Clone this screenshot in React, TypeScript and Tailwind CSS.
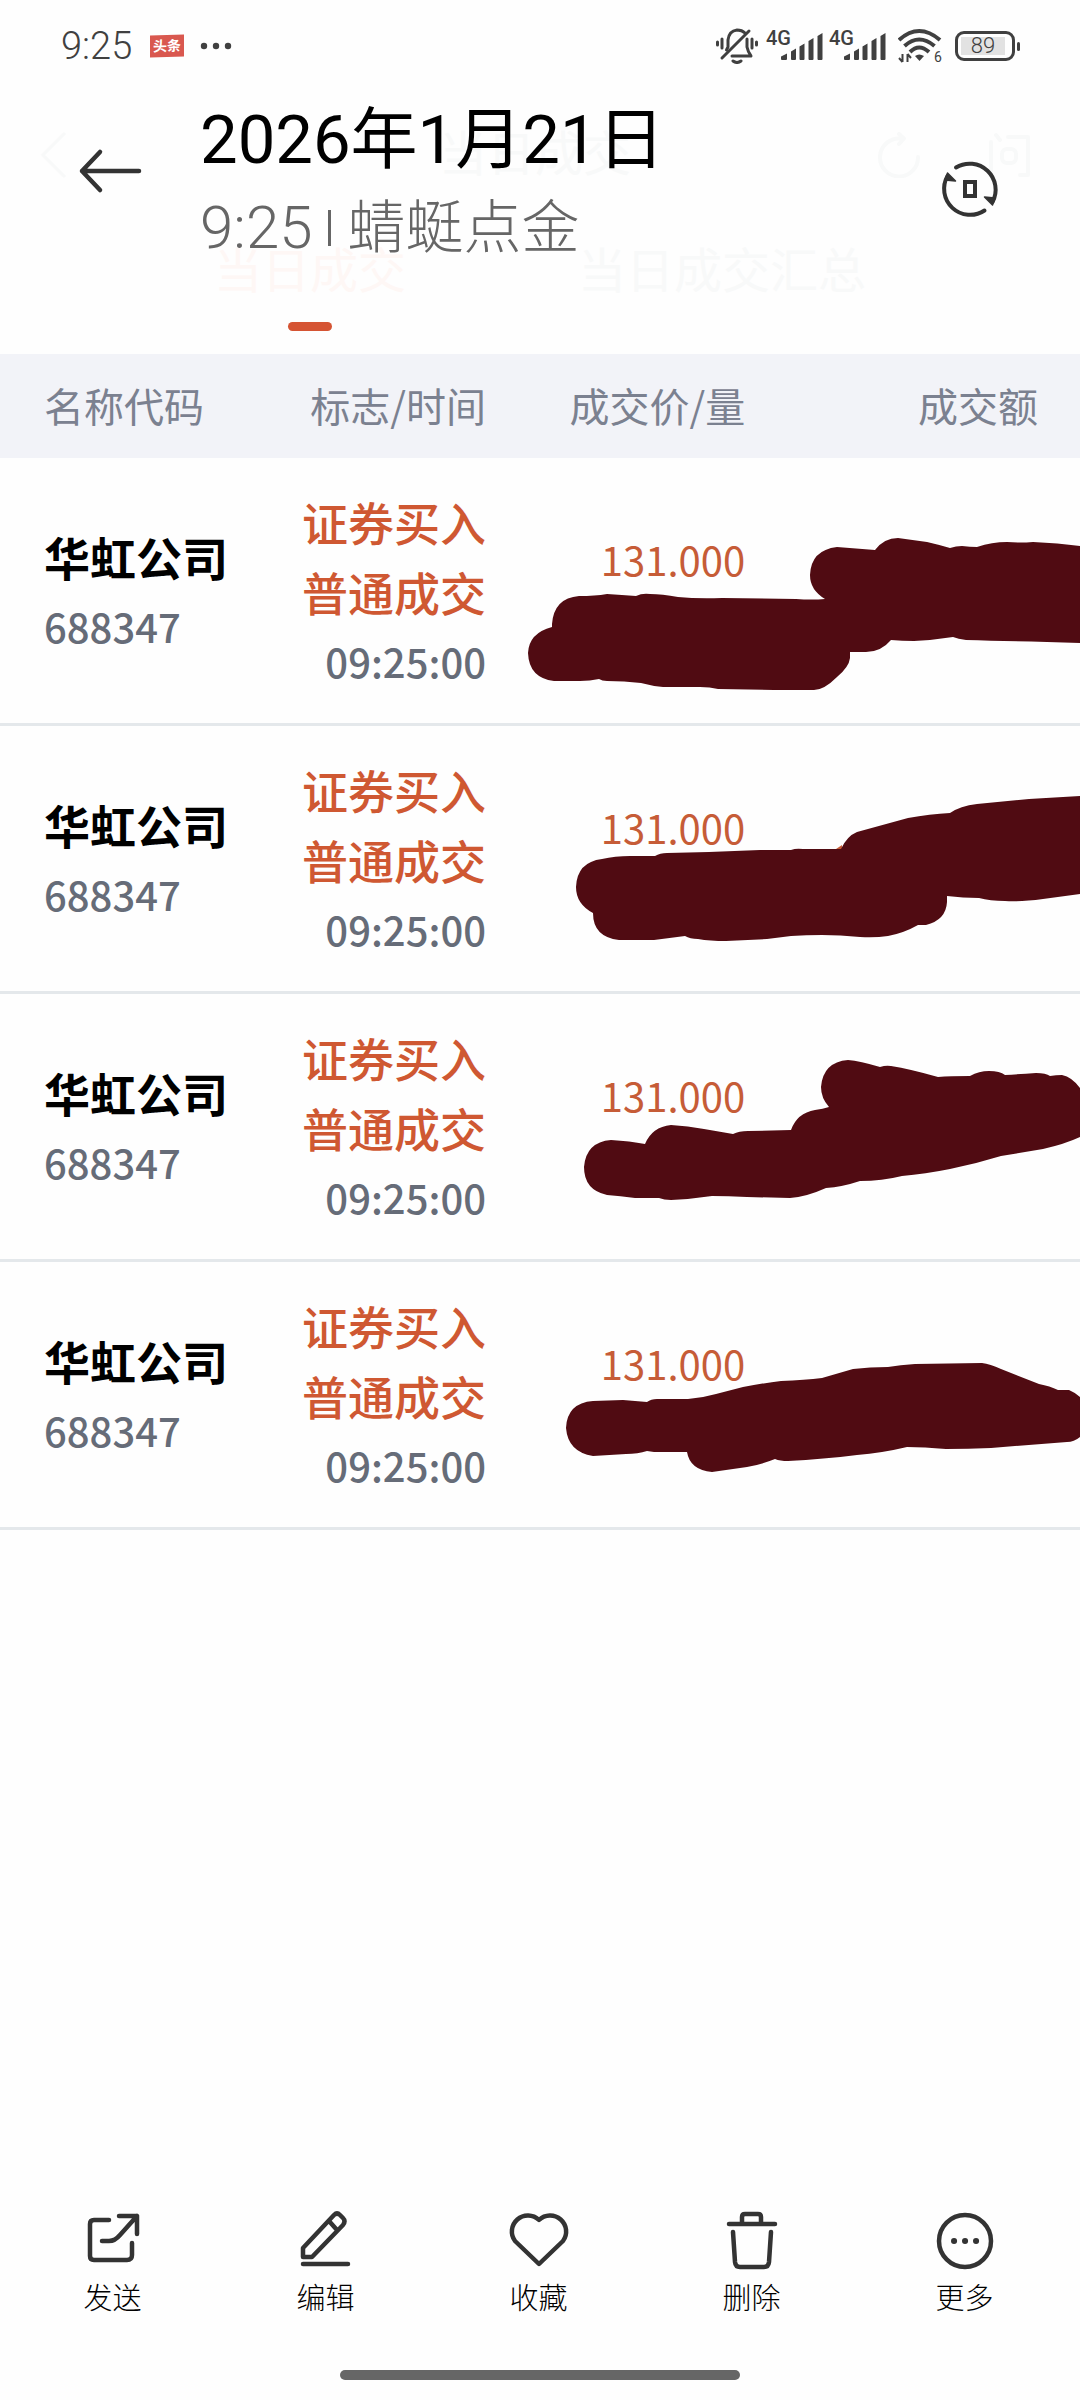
import type { ReactNode } from 'react'

interface Trade {
  name: string
  code: string
  side: string
  kind: string
  time: string
  price: string
  mark: string   // outline of the marker stroke, in row coordinates
  speck?: boolean
}

const base = {
  name: '华虹公司',
  code: '688347',
  side: '证券买入',
  kind: '普通成交',
  time: '09:25:00',
  price: '131.000',
}

const trades: Trade[] = [
  {
    ...base,
    mark: 'M8 195Q9 175 32 169V166Q34 140 59 138Q75 138 87 136Q102 137 116 138Q122 135 130 136Q142 136 158 139Q178 141 202 140L276 141Q292 142 305 141Q290 132 290 117Q291 92 317 89L355 92Q364 80 378 80L407 84Q420 87 430 90Q436 88 442 88Q450 89 457 89Q472 84 487 84Q500 85 513 84Q538 85 560 88V185L527 184Q480 183 446 182Q438 181 433 179Q414 182 394 183Q382 183 371 182Q361 194 346 194H330V200Q329 209 317 219Q304 232 294 232L254 232L198 231Q190 229 180 229H143Q132 228 121 225Q104 223 87 223Q82 223 79 221Q70 223 60 223H34Q9 220 8 195Z',
  },
  {
    ...base,
    speck: true,
    mark: 'M56 161Q57 136 82 133Q95 130 110 130H135Q140 127 147 127L189 126L240 124L271 124Q276 122 283 123H321Q327 110 337 106L388 92Q410 88 430 87Q440 80 457 78L509 73L560 70V168L523 173Q500 176 485 175Q470 175 459 172Q443 172 427 170V176Q426 194 406 199H398Q384 207 368 210Q355 212 340 211Q320 209 302 209Q286 209 271 210L247 213L206 215Q190 215 178 213Q170 213 165 210L134 214H99Q73 211 73 187Q56 178 56 161Z',
  },
  {
    ...base,
    mark: 'M64 173Q66 148 91 146Q110 147 125 150Q132 133 151 131Q168 132 184 135L213 140Q219 137 228 137L271 136Q277 119 295 116Q303 115 309 113Q301 104 301 93Q303 68 328 66Q340 67 360 73Q366 71 371 72Q390 75 418 83Q430 82 450 82Q459 77 469 77Q480 77 485 81Q500 80 516 79Q526 79 530 82Q536 81 542 81Q552 83 560 94V143Q545 150 523 155L481 162Q455 170 430 175Q405 180 382 182Q362 187 340 187Q322 193 306 194Q286 203 270 204L227 203Q208 202 192 202Q172 205 151 206Q144 206 139 204H115Q100 202 87 201Q64 196 64 173Z',
  },
  {
    ...base,
    mark: 'M46 166Q47 141 73 139L103 138L127 140Q131 137 137 137H168Q182 136 196 132L223 125Q244 121 261 119Q285 118 302 116L333 107Q350 105 368 105Q380 103 395 102L462 101Q470 102 481 107L519 122Q530 124 538 128H549Q556 131 560 135V175Q554 180 547 180L471 186Q448 187 426 187Q404 185 387 185Q362 191 337 193Q304 197 268 199Q260 199 255 197Q240 203 227 205L192 210Q170 208 167 190H134L127 189Q118 192 106 192L73 194Q48 190 46 166Z',
  },
]

function Signal() {
  return (
    <div className="flex items-start">
      <span className="text-xl leading-[20px] font-medium">4G</span>
      <svg width="42" height="30" viewBox="0 0 42 30" fill="currentColor" className="-ml-2.5 mt-1">
        <path d="M0 27V24.500L6 21.500V27Q6 28 5 28H1Q0 28 0 27ZM10 19.500L15 16.500V27Q15 28 14 28H11Q10 28 10 27ZM18.500 14.500L23.500 11.500V27Q23.500 28 22.500 28H19.500Q18.500 28 18.500 27ZM27.500 9L32.500 6V27Q32.500 28 31.500 28H28.500Q27.500 28 27.500 27ZM36.500 4L41.500 1V27Q41.500 28 40.500 28H37.500Q36.500 28 36.500 27Z" />
      </svg>
    </div>
  )
}

function StatusBar() {
  return (
    <div className="flex items-start justify-between pt-7 h-[94px] pl-[61px] pr-[60px] text-[#404040]">
      <div className="flex items-center h-9">
        <span className="text-[38px] leading-9 font-light">9:25</span>
        <span className="ml-[18px] px-[3px] h-[22px] -skew-y-2 bg-[#d9584f] text-white text-sm leading-[22px] font-bold">
          头条
        </span>
        <svg width="32" height="8" viewBox="0 0 32 8" fill="currentColor" className="ml-4">
          <circle cx="4" cy="4" r="3.200" />
          <circle cx="16" cy="4" r="3.200" />
          <circle cx="28" cy="4" r="3.200" />
        </svg>
      </div>

      <div className="flex items-start">
        <svg width="42" height="36" viewBox="0 0 42 36" fill="none" stroke="currentColor" strokeWidth="3" strokeLinecap="round">
          <path d="M1.500 14V17M6 11V20M10.500 22L12 19V12Q13 3 21 2Q26 2 29 5" />
          <path d="M31 11V19Q32 24 35 28H16" strokeLinejoin="round" />
          <path d="M36 11V20M40.500 14V17M6 30L33 3" />
          <path d="M17 33Q21 36 25 33" />
        </svg>
        <div className="flex ml-2 gap-[6px]">
          <Signal />
          <Signal />
        </div>
        <div className="relative ml-3">
          <svg width="44" height="36" viewBox="0 0 44 36" fill="none" stroke="currentColor" strokeWidth="4">
            <path d="M1 12Q21 -6 42 12" />
            <path d="M6.500 18Q21 5 36.500 18" />
            <path d="M12 24Q21 15 31 24" />
            <path d="M17 28Q21 25 26 28L21.500 33Z" fill="currentColor" stroke="none" />
            <path d="M4.500 26V34M9.500 34V26M1 30L4.500 34M9.500 26L13 30" strokeWidth="2" />
          </svg>
          <span className="absolute left-9 top-[22px] text-sm leading-[14px]">6</span>
        </div>
        <div className="flex items-center ml-[13px] mt-[3px]">
          <div className="w-[60px] h-[30px] rounded-[9px] border-[3px] border-current p-[3px]">
            <div className="h-full w-11 bg-[#e2e2e2] text-[22px] leading-[18px] text-center font-light">
              89
            </div>
          </div>
          <div className="ml-0.5 w-[3px] h-[9px] rounded-sm bg-current" />
        </div>
      </div>
    </div>
  )
}

// Trading page header, faded out behind the album title
function FadedHeader() {
  return (
    <div className="col-start-1 row-start-1 text-[#f8f9f9]">
      <div className="grid grid-cols-3 items-center h-[122px] pl-10 pr-[50px] text-5xl">
        <svg width="28" height="46" viewBox="0 0 28 46" fill="none" stroke="currentColor" strokeWidth="3">
          <path d="M25 1L3 23L25 45" />
        </svg>
        <span className="text-center">当日成交</span>
        <div className="flex justify-end gap-[68px]">
          <svg width="42" height="46" viewBox="0 0 42 46" fill="none" stroke="currentColor" strokeWidth="4" strokeLinecap="round" strokeLinejoin="round">
            <path d="M23 6.500A19 19 0 1 0 40 25M21 2L26 6.500L21 12" />
          </svg>
          <svg width="42" height="46" viewBox="0 0 42 46" fill="none" stroke="currentColor" strokeWidth="4" strokeLinecap="round" strokeLinejoin="round">
            <path d="M3 10V40M8 3L12 8M20 5H40V43H32" />
            <rect x="14" y="17" width="14" height="14" rx="5" />
          </svg>
        </div>
      </div>
      <div className="flex justify-center gap-[172px] text-5xl leading-[100px]">
        <div className="flex flex-col items-center">
          <span className="pt-1.5 text-[#fef7f5]">当日成交</span>
          <span className="w-11 h-[9px] rounded-full bg-[#d55433]" />
        </div>
        <span className="pt-1.5">当日成交汇总</span>
      </div>
    </div>
  )
}

function TitleBar() {
  return (
    <header className="col-start-1 row-start-1 flex items-start pl-[78px] pr-[80px] h-[260px]">
      <button aria-label="返回" className="mt-[53px] text-[#333]">
        <svg width="64" height="48" viewBox="0 0 64 48" fill="none" stroke="currentColor" strokeWidth="4.500" strokeLinecap="round" strokeLinejoin="round">
          <path d="M61 24H4M22 5L4 24L22 43" />
        </svg>
      </button>
      <div className="ml-[58px] mt-0.5">
        <h1 className="text-[67px] leading-[88px] text-black">2026年1月21日</h1>
        <p className="flex items-center leading-[88px] font-light text-[#666]">
          <span className="text-[60px]">9:25</span>
          <span className="mx-4 w-[3px] h-9 bg-[#666]" />
          <span className="text-[58px]">蜻蜓点金</span>
        </p>
      </div>
      <button aria-label="旋转" className="ml-auto mt-[65px] text-[#333]">
        <svg width="60" height="60" viewBox="0 0 60 60" fill="none" stroke="currentColor" strokeWidth="4" strokeLinecap="round">
          <path d="M16 8.500A26 26 0 0 1 52.500 43" />
          <path d="M44.500 51.500A26 26 0 0 1 7.500 17" />
          <path d="M7.500 14L15.500 22L5 21Z" fill="currentColor" strokeWidth="1.500" strokeLinejoin="round" />
          <path d="M52.500 46L44.500 38L55 39Z" fill="currentColor" strokeWidth="1.500" strokeLinejoin="round" />
          <rect x="25" y="23" width="10" height="14" />
        </svg>
      </button>
    </header>
  )
}

function TradeRow({ trade }: { trade: Trade }) {
  return (
    <tr className="h-[268px] *:border-b-[3px] *:border-[#e4e8eb]">
      <td className="pl-11">
        <div className="text-[46px] leading-[70px] font-bold text-black">{trade.name}</div>
        <div className="text-[40px] leading-[70px] font-medium text-[#666c78]">{trade.code}</div>
      </td>
      <td className="text-right">
        <div className="text-[46px] leading-[70px] font-medium text-[#cf5832]">{trade.side}</div>
        <div className="text-[46px] leading-[70px] font-medium text-[#cf5832]">{trade.kind}</div>
        <div className="text-[40px] leading-[70px] font-medium text-[#666c78]">{trade.time}</div>
      </td>
      <td className="pb-16 text-right text-[40px] leading-[70px] text-[#c65c37]">{trade.price}</td>
      <td className="relative">
        <svg width="560" height="268" viewBox="0 0 560 268" className="absolute right-0 top-0 max-w-none">
          {trade.speck && <path d="M316 123L322 119V124Z" fill="#c65c37" />}
          <path d={trade.mark} fill="#500b12" />
        </svg>
      </td>
    </tr>
  )
}

function Action({ label, children }: { label: string; children: ReactNode }) {
  return (
    <button className="flex flex-col items-center text-[#333]">
      <svg width="64" height="64" viewBox="0 8 64 64" fill="none" stroke="currentColor" strokeWidth="4.500" strokeLinecap="round" strokeLinejoin="round">
        {children}
      </svg>
      <span className="mt-1 text-[29px] leading-[40px] font-light text-black">{label}</span>
    </button>
  )
}

export default function App() {
  return (
    <div className="min-h-screen flex flex-col bg-[#fefefe] font-[Roboto,'Noto_Sans_CJK_SC',sans-serif] overflow-x-hidden">
      <StatusBar />
      <div className="grid">
        <FadedHeader />
        <TitleBar />
      </div>

      <table className="w-full table-fixed border-separate border-spacing-0 font-['Noto_Sans_CJK_SC',sans-serif]">
        <thead>
          <tr className="h-[104px] bg-[#f2f3f8] text-[40px] text-[#7b8190] *:pb-[3px]">
            <th className="w-[22%] pl-11 text-left font-normal">名称代码</th>
            <th className="w-[23%] text-right font-normal">标志/时间</th>
            <th className="w-[24%] text-right font-normal">成交价/量</th>
            <th className="w-[31%] pr-[42px] text-right font-normal">成交额</th>
          </tr>
        </thead>
        <tbody>
          {trades.map((t, i) => (
            <TradeRow key={i} trade={t} />
          ))}
        </tbody>
      </table>

      <nav className="mt-auto grid grid-cols-5 pl-1.5 pr-[9px]">
        <Action label="发送">
          <path d="M28 17H13Q9 17 9 21V53Q9 57 13 57H46Q51 57 51 52V40" />
          <path d="M38 13H56V31M56 13L39 32Q34 38 28 38H21" />
        </Action>
        <Action label="编辑">
          <path d="M9 53V45L40 12Q43 9 46 12L49 15Q52 18 49 22L18 54H9ZM35 18L43 27M9 61H54" />
        </Action>
        <Action label="收藏">
          <path d="M32 61L8 38A16 16 0 0 1 32 17A16 16 0 0 1 56 38Z" />
        </Action>
        <Action label="删除">
          <path d="M9 21H55M22 20V14Q22 11 25 11H38Q41 11 41 14V20" />
          <path d="M13 29L15 59Q15.500 64 20 64H44Q48.500 64 49 59L51 29" />
        </Action>
        <Action label="更多">
          <circle cx="32" cy="38" r="26" />
          <path d="M21 38H21.100M32 38H32.100M43 38H43.100" strokeWidth="6" />
        </Action>
      </nav>
      <div className="mx-auto mt-[51px] mb-5 w-[37%] h-2.5 rounded-full bg-[#666]" />
    </div>
  )
}
